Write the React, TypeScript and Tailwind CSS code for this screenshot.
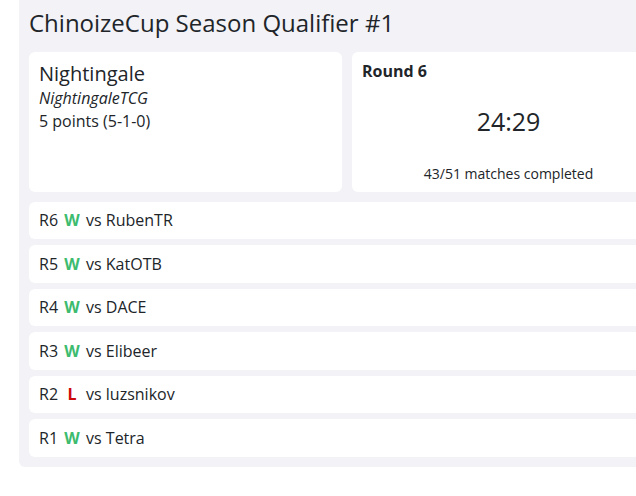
import React from 'react'

type Match = {
  round: number
  result: 'W' | 'L'
  opponent: string
}

const matches: Match[] = [
  { round: 6, result: 'W', opponent: 'RubenTR' },
  { round: 5, result: 'W', opponent: 'KatOTB' },
  { round: 4, result: 'W', opponent: 'DACE' },
  { round: 3, result: 'W', opponent: 'Elibeer' },
  { round: 2, result: 'L', opponent: 'luzsnikov' },
  { round: 1, result: 'W', opponent: 'Tetra' },
]

function PlayerCard() {
  return (
    <div className="bg-white rounded-md px-2.5 pt-2 pb-2">
      <div className="text-[20px] leading-[27px]">Nightingale</div>
      <div className="italic text-base leading-[22.5px]">NightingaleTCG</div>
      <div className="text-base leading-[22.5px]">5 points (5-1-0)</div>
    </div>
  )
}

function RoundCard() {
  return (
    <div className="bg-white rounded-md px-2.5 pt-[9px] pb-2 flex flex-col">
      <div className="font-bold text-base leading-[21.5px]">Round 6</div>
      <div className="h-[81px] pb-1 flex items-center justify-center text-[25px] leading-[34px]">
        24:29
      </div>
      <div className="text-sm leading-[19px] pb-px text-center">43/51 matches completed</div>
    </div>
  )
}

function MatchRow({ match }: { match: Match }) {
  const isWin = match.result === 'W'
  return (
    <div className="bg-white rounded-md px-2.5 pt-[8.5px] pb-[7.5px] flex items-center gap-1 text-base leading-[21.5px]">
      <span>R{match.round}</span>
      <span
        className={
          isWin
            ? 'w-[20px] text-center font-bold text-[#3dbb6e]'
            : 'w-[20px] text-center font-bold text-[#cc0a0a]'
        }
      >
        {match.result}
      </span>
      <span>vs {match.opponent}</span>
    </div>
  )
}

export default function App() {
  return (
    <div
      className="w-[636px] h-[496px] overflow-hidden bg-white text-[#212529]"
      style={{ fontFamily: '"Open Sans", "Noto Sans", sans-serif' }}
    >
      <div className="ml-[19px] w-[656px] bg-[#f2f2f7] rounded-bl-md px-2.5 pt-[7px] pb-2.5">
        <h1 className="text-2xl leading-8 mb-[13px]">ChinoizeCup Season Qualifier #1</h1>
        <div className="grid grid-cols-2 gap-2.5">
          <PlayerCard />
          <RoundCard />
        </div>
        <div className="mt-2.5 flex flex-col gap-1.5">
          {matches.map((m) => (
            <MatchRow key={m.round} match={m} />
          ))}
        </div>
      </div>
    </div>
  )
}
